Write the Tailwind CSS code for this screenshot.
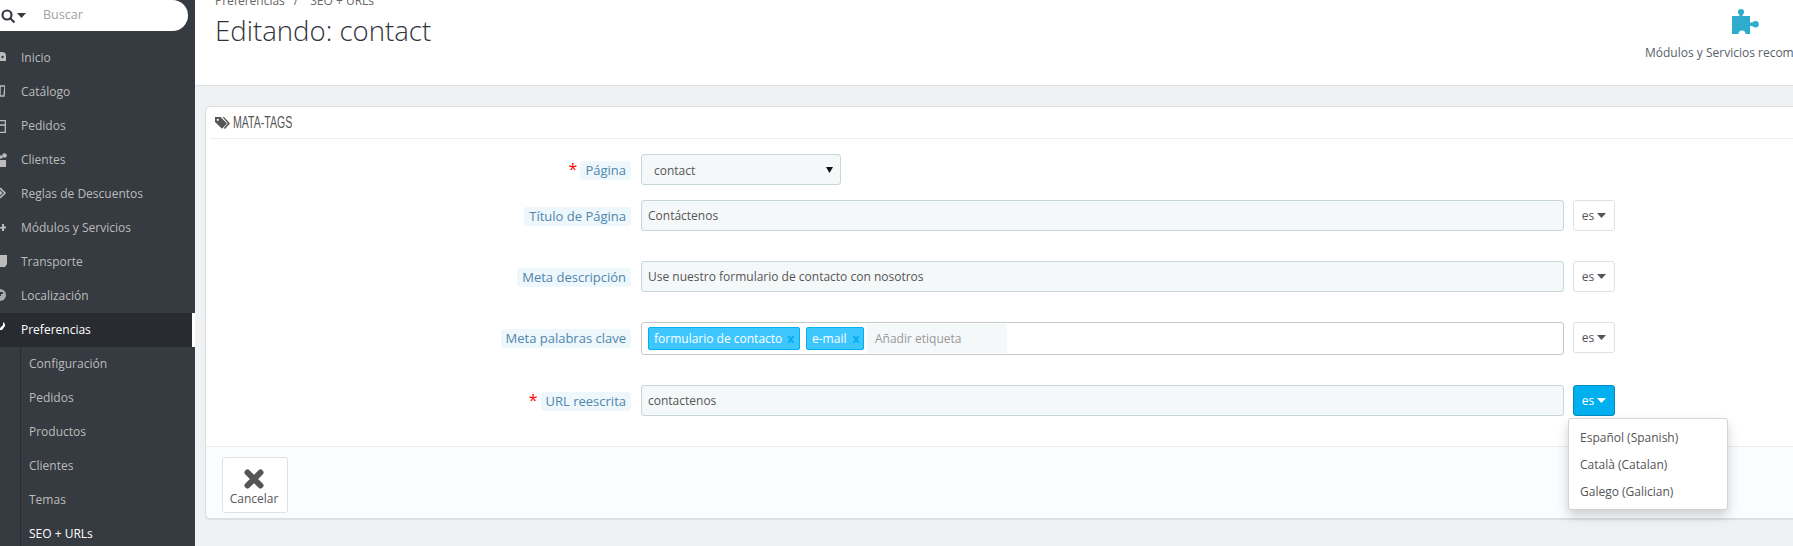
<!DOCTYPE html>
<html lang="es">
<head>
    <meta charset="UTF-8">
    <title>Editando: contact</title>
    <script src="https://cdn.jsdelivr.net/npm/@tailwindcss/browser@4"></script>
</head>
<body class="bg-[#eff1f2] text-[#555] font-['Open_Sans',sans-serif] text-[12px]">
<div class="flex h-[546px] w-[1793px] overflow-hidden">

    <!-- sidebar -->
    <nav class="w-[195px] shrink-0 bg-[#363a41] text-[#bcbcbc] flex flex-col">
        <div class="h-[31px] w-[188px] bg-white rounded-r-[16px] flex items-center shrink-0">
            <svg class="w-[14px] h-[14px] ml-[1px]" viewBox="0 0 14 14" fill="none" stroke="#363a41" stroke-width="2.200"><circle cx="6" cy="6" r="4.500"/><path d="M9 9l4.500 4.500"/></svg>
            <svg class="w-[9px] h-[5px] ml-[2px]" viewBox="0 0 9 5"><path d="M0 0h9L4.500 5z" fill="#363a41"/></svg>
            <span class="ml-[17px] text-[#a0a0a0] text-[12.500px]">Buscar</span>
        </div>
        <ul class="mt-[10px] flex flex-col">
            <li class="h-[34px] flex items-center pl-[21px] relative"><svg class="absolute left-0 top-[11px] w-[6px] h-[11px]" viewBox="0 0 6 11"><path d="M0 0h2a4 4 0 0 1 4 4v5H0z" fill="#bcbcbc"/><circle cx="2.500" cy="5" r="1.200" fill="#363a41"/></svg>Inicio</li>
            <li class="h-[34px] flex items-center pl-[21px] relative"><svg class="absolute left-0 top-[10px] w-[5px] h-[12px]" viewBox="0 0 5 12"><path d="M0 1h5L4 11H0z" fill="none" stroke="#bcbcbc" stroke-width="1.400"/></svg>Catálogo</li>
            <li class="h-[34px] flex items-center pl-[21px] relative"><svg class="absolute left-0 top-[11px] w-[6px] h-[13px]" viewBox="0 0 6 13"><path d="M0 .7h5.300v11.600H0M0 5h5" fill="none" stroke="#bcbcbc" stroke-width="1.300"/></svg>Pedidos</li>
            <li class="h-[34px] flex items-center pl-[21px] relative"><svg class="absolute left-0 top-[10px] w-[7px] h-[14px]" viewBox="0 0 7 14"><circle cx="4.500" cy="2.500" r="2.300" fill="#bcbcbc"/><circle cx="1" cy="4" r="1.800" fill="#bcbcbc"/><path d="M0 7h6v7H0z" fill="#bcbcbc"/></svg>Clientes</li>
            <li class="h-[34px] flex items-center pl-[21px] relative"><svg class="absolute left-0 top-[10px] w-[7px] h-[12px]" viewBox="0 0 7 12"><path d="M0 1l5 5-5 5" fill="none" stroke="#bcbcbc" stroke-width="1.600"/><path d="M0 3.500L2.500 6 0 8.500z" fill="#bcbcbc"/></svg>Reglas de Descuentos</li>
            <li class="h-[34px] flex items-center pl-[21px] relative"><svg class="absolute left-0 top-[12px] w-[6px] h-[9px]" viewBox="0 0 6 9"><path d="M0 4h2V1h2v2.500h2v2H4V8H2V5.500H0z" fill="#bcbcbc"/></svg>Módulos y Servicios</li>
            <li class="h-[34px] flex items-center pl-[21px] relative"><svg class="absolute left-0 top-[10px] w-[7px] h-[12px]" viewBox="0 0 7 12"><path d="M0 0h7v9L5 12H0z" fill="#bcbcbc"/></svg>Transporte</li>
            <li class="h-[34px] flex items-center pl-[21px] relative"><svg class="absolute left-0 top-[10px] w-[6px] h-[12px]" viewBox="0 0 6 12"><path d="M0 0a6 6 0 0 1 0 12z" fill="#a9acaf"/><path d="M0 3h3v2H1v2H0z" fill="#363a41"/></svg>Localización</li>
            <li class="h-[34px] flex items-center pl-[21px] relative bg-[#282b30] text-white border-r-[3px] border-white"><svg class="absolute left-0 top-[9px] w-[5px] h-[8px]" viewBox="0 0 5 8"><path d="M0 6l3-3V0l2 2v2L2 8H0z" fill="#fff"/></svg>Preferencias</li>
        </ul>
        <ul class="ml-[20px] border-l border-[#282b30] flex flex-col pl-[8px] flex-1">
            <li class="h-[34px] flex items-center">Configuración</li>
            <li class="h-[34px] flex items-center">Pedidos</li>
            <li class="h-[34px] flex items-center">Productos</li>
            <li class="h-[34px] flex items-center">Clientes</li>
            <li class="h-[34px] flex items-center">Temas</li>
            <li class="h-[34px] flex items-center text-white">SEO + URLs</li>
        </ul>
    </nav>

    <!-- main -->
    <main class="flex-1 min-w-0">
        <header class="h-[86px] bg-white border-b border-[#dfe2e4] flex justify-between overflow-hidden">
            <div class="pl-[20px]">
                <div class="-mt-[8px] h-[17px] leading-[17px] text-[#666] flex"><span>Preferencias</span><span class="ml-[9px]">/</span><span class="ml-[12px]">SEO + URLs</span></div>
                <h1 class="mt-[6px] text-[27.600px] font-light leading-[30px] text-[#2f333a]">Editando: contact</h1>
            </div>
            <div class="w-[150px] shrink-0 pt-[9px] flex flex-col whitespace-nowrap overflow-hidden text-[#56606a]">
                <svg class="w-[27px] h-[25px] ml-[89px]" viewBox="0 0 27 25"><path d="M0 7h7.500V4h3v3H18v6.500h3v3.500h-3V25h-4.500a3.500 3.500 0 1 0-7 0H0z" fill="#2eacce"/><circle cx="9" cy="3" r="3" fill="#2eacce"/><circle cx="23.500" cy="15.200" r="3.300" fill="#2eacce"/></svg>
                <span class="mt-[10px] ml-[2px]">Módulos y Servicios recomendados</span>
            </div>
        </header>

        <section class="mt-[20px] ml-[10px] -mr-[10px] h-[413px] bg-white border border-[#dcdfe1] rounded-[5px] shadow-[0_1px_1px_rgba(0,0,0,0.08)] flex flex-col">
            <div class="mx-[4px] h-[32px] border-b border-[#eceeef] flex items-center pl-[5px] text-[#555]">
                <svg class="w-[15px] h-[12px]" viewBox="0 0 15 12"><path d="M0 0h5.500L12 6.500 7 11.800 0 5z" fill="#555"/><path d="M7.500 0h1.500L15 6.500 10 12 8.800 11l4-4.500z" fill="#555"/><circle cx="2.800" cy="2.800" r="1.100" fill="#fff"/></svg>
                <h3 class="ml-[3px] origin-left scale-x-[0.66] text-[16px] leading-[18px] font-['Liberation_Sans',sans-serif]">MATA-TAGS</h3>
            </div>

            <form class="flex-1 flex flex-col pt-[15px]">
                <div class="flex items-start h-[31px]">
                    <div class="w-[425px] flex justify-end pt-[7px]"><span class="text-[#f00] text-[16px] leading-[16px] mr-[3px]">*</span><span class="bg-[#eef7fb] text-[#4f86ae] rounded-[3px] px-[5px] h-[19px] leading-[19px] text-[13px]">Página</span></div>
                    <div class="ml-[10px] w-[200px] h-[31px] bg-[#f5f8f9] border border-[#c7d6db] rounded-[3px] flex items-center justify-between pl-[12px] pr-[7px]"><span class="pt-[2px]">contact</span><svg class="w-[7px] h-[6px]" viewBox="0 0 7 6"><path d="M0 0h7L3.500 6z" fill="#111"/></svg></div>
                </div>
                <div class="flex items-start mt-[15px]">
                    <div class="w-[425px] flex justify-end pt-[7px]"><span class="bg-[#eef7fb] text-[#4f86ae] rounded-[3px] px-[5px] h-[19px] leading-[19px] text-[13px]">Título de Página</span></div>
                    <input class="ml-[10px] w-[923px] h-[31px] bg-[#f5f8f9] border border-[#c7d6db] rounded-[3px] px-[6px] text-[#555] outline-none" value="Contáctenos">
                    <div class="ml-[9px] w-[42px] h-[31px] bg-white border border-[#dfe2e4] rounded-[3px] flex items-center justify-center gap-[3px]"><span>es</span><svg class="w-[9px] h-[5px]" viewBox="0 0 9 5"><path d="M0 0h9L4.500 5z" fill="#555"/></svg></div>
                </div>
                <div class="flex items-start mt-[30px]">
                    <div class="w-[425px] flex justify-end pt-[7px]"><span class="bg-[#eef7fb] text-[#4f86ae] rounded-[3px] px-[5px] h-[19px] leading-[19px] text-[13px]">Meta descripción</span></div>
                    <input class="ml-[10px] w-[923px] h-[31px] bg-[#f5f8f9] border border-[#c7d6db] rounded-[3px] px-[6px] text-[#555] outline-none" value="Use nuestro formulario de contacto con nosotros">
                    <div class="ml-[9px] w-[42px] h-[31px] bg-white border border-[#dfe2e4] rounded-[3px] flex items-center justify-center gap-[3px]"><span>es</span><svg class="w-[9px] h-[5px]" viewBox="0 0 9 5"><path d="M0 0h9L4.500 5z" fill="#555"/></svg></div>
                </div>
                <div class="flex items-start mt-[30px]">
                    <div class="w-[425px] flex justify-end pt-[7px]"><span class="bg-[#eef7fb] text-[#4f86ae] rounded-[3px] px-[5px] h-[19px] leading-[19px] text-[13px]">Meta palabras clave</span></div>
                    <div class="ml-[10px] w-[923px] h-[33px] bg-white border border-[#c8c8c8] rounded-[3px] flex items-center pl-[6px]">
                        <span class="h-[23px] w-[152px] shrink-0 bg-[#3ec6ff] border border-[#00aff0] rounded-[2px] text-white font-medium flex items-center pl-[5px]">formulario de contacto<b class="ml-[5px] text-[#00aff0] font-bold">x</b></span>
                        <span class="ml-[6px] h-[23px] w-[58px] shrink-0 bg-[#3ec6ff] border border-[#00aff0] rounded-[2px] text-white font-medium flex items-center pl-[5px]">e-mail<b class="ml-[6px] text-[#00aff0] font-bold">x</b></span>
                        <span class="ml-[3px] w-[140px] h-[29px] bg-[#f5f8f9] flex items-center pl-[8px] pt-[1px] text-[#999]">Añadir etiqueta</span>
                    </div>
                    <div class="ml-[9px] w-[42px] h-[31px] bg-white border border-[#dfe2e4] rounded-[3px] flex items-center justify-center gap-[3px]"><span>es</span><svg class="w-[9px] h-[5px]" viewBox="0 0 9 5"><path d="M0 0h9L4.500 5z" fill="#555"/></svg></div>
                </div>
                <div class="flex items-start mt-[30px]">
                    <div class="w-[425px] flex justify-end pt-[7px]"><span class="text-[#f00] text-[16px] leading-[16px] mr-[3px]">*</span><span class="bg-[#eef7fb] text-[#4f86ae] rounded-[3px] px-[5px] h-[19px] leading-[19px] text-[13px]">URL reescrita</span></div>
                    <input class="ml-[10px] w-[923px] h-[31px] bg-[#f5f8f9] border border-[#c7d6db] rounded-[3px] px-[6px] text-[#555] outline-none" value="contactenos">
                    <div class="relative ml-[9px] w-[42px] h-[31px] bg-[#00aff0] border border-[#008abd] rounded-[3px] flex items-center justify-center gap-[3px] text-white">
                        <span>es</span><svg class="w-[9px] h-[5px]" viewBox="0 0 9 5"><path d="M0 0h9L4.500 5z" fill="#fff"/></svg>
                        <ul class="absolute z-10 left-[-6px] top-[32px] w-[160px] h-[92px] bg-white border border-[#d0d3d5] rounded-[3px] shadow-[0_6px_12px_rgba(0,0,0,0.18)] py-[5px] text-[#555] whitespace-nowrap">
                            <li class="h-[27px] leading-[27px] pl-[11px]">Español (Spanish)</li>
                            <li class="h-[27px] leading-[27px] pl-[11px]">Català (Catalan)</li>
                            <li class="h-[27px] leading-[27px] pl-[11px]">Galego (Galician)</li>
                        </ul>
                    </div>
                </div>

                <div class="mt-auto h-[72px] bg-[#fbfcfd] border-t border-[#eceeef] rounded-b-[5px] pl-[16px] pt-[10px]">
                    <button type="button" class="w-[66px] h-[56px] bg-white border border-[#dfe2e4] rounded-[3px] flex flex-col items-center pt-[11px] pr-[2px] text-[#555]">
                        <svg class="w-[20px] h-[20px]" viewBox="0 0 20 20"><path d="M3.500 3.500l13 13M16.500 3.500l-13 13" stroke="#555" stroke-width="6" stroke-linecap="round"/></svg>
                        <span class="leading-[16px] mt-[2px]">Cancelar</span>
                    </button>
                </div>
            </form>
        </section>
    </main>
</div>
</body>
</html>
